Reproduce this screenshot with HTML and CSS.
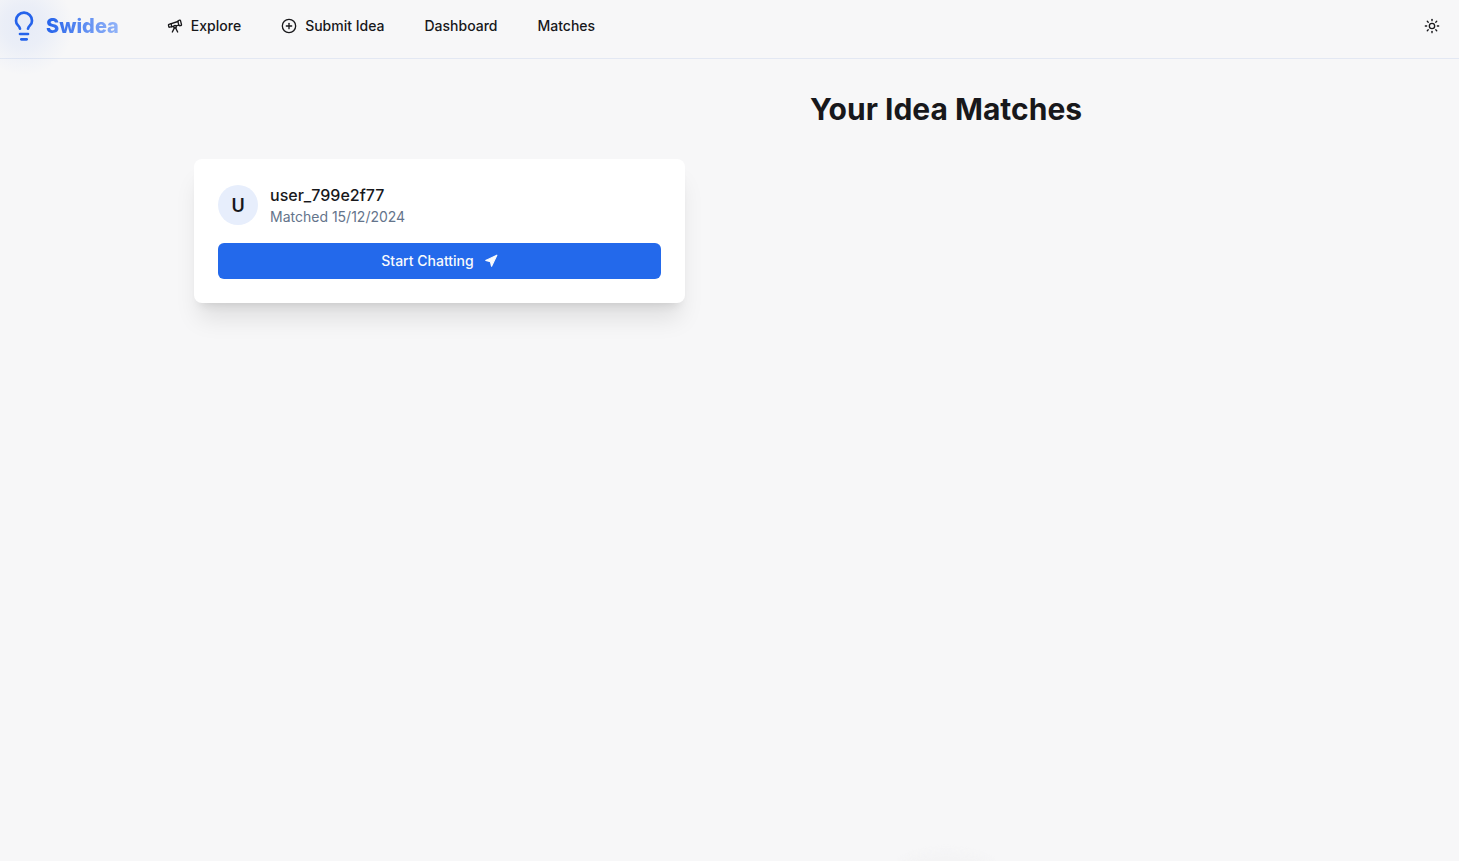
FILE: index.html
```html
<!DOCTYPE html>
<html lang="en">
<head>
  <meta charset="UTF-8">
  <meta name="viewport" content="width=device-width, initial-scale=1.0">
  <title>Swidea - Matches</title>
  <link rel="stylesheet" href="styles.css">
</head>
<body>
<header class="navbar">
  <div class="brand">
    <span class="brand-glow"></span>
    <svg class="brand-icon" viewBox="0 0 24 24">
      <path d="M15 14c.2-1 .7-1.7 1.5-2.5 1-.9 1.5-2.2 1.5-3.5A6 6 0 0 0 6 8c0 1 .2 2.2 1.5 3.5.7.7 1.3 1.5 1.5 2.5"/>
      <path d="M9 18h6"/>
      <path d="M10 22h4"/>
    </svg>
    <span class="brand-name">Swidea</span>
  </div>
  <nav class="nav-links">
    <a class="nav-link" href="#">
      <svg class="icon" viewBox="0 0 24 24">
        <path d="m10.065 12.493-6.18 1.318a.934.934 0 0 1-1.108-.702l-.537-2.15a1.07 1.07 0 0 1 .691-1.265l13.504-4.44"/>
        <path d="m13.56 11.747 4.332-.924"/>
        <path d="m16 21-3.105-6.21"/>
        <path d="M16.485 5.94a2 2 0 0 1 1.455-2.425l1.09-.272a1 1 0 0 1 1.212.727l1.515 6.06a1 1 0 0 1-.727 1.213l-1.09.272a2 2 0 0 1-2.425-1.455z"/>
        <path d="m6.158 8.633 1.114 4.456"/>
        <path d="m8 21 3.105-6.21"/>
        <circle cx="12" cy="13" r="2"/>
      </svg>
      Explore
    </a>
    <a class="nav-link" href="#">
      <svg class="icon" viewBox="0 0 24 24">
        <circle cx="12" cy="12" r="10"/>
        <path d="M8 12h8"/>
        <path d="M12 8v8"/>
      </svg>
      Submit Idea
    </a>
    <a class="nav-link" href="#">Dashboard</a>
    <a class="nav-link" href="#">Matches</a>
  </nav>
  <button class="theme-toggle" type="button" aria-label="Toggle theme">
    <svg class="icon" viewBox="0 0 24 24">
      <circle cx="12" cy="12" r="4"/>
      <path d="M12 2v2"/>
      <path d="M12 20v2"/>
      <path d="m4.93 4.93 1.41 1.41"/>
      <path d="m17.66 17.66 1.41 1.41"/>
      <path d="M2 12h2"/>
      <path d="M20 12h2"/>
      <path d="m6.34 17.66-1.41 1.41"/>
      <path d="m19.07 4.93-1.41 1.41"/>
    </svg>
  </button>
</header>

<main class="matches">
  <h1 class="matches-title">Your Idea Matches</h1>
  <div class="match-card">
    <div class="match-user">
      <div class="avatar">U</div>
      <div>
        <div class="user-name">user_799e2f77</div>
        <div class="match-date">Matched 15/12/2024</div>
      </div>
    </div>
    <button class="chat-button" type="button">
      <span class="chat-label">Start Chatting</span>
      <svg class="send-icon" viewBox="0 0 24 24">
        <polygon points="3 11 22 2 13 21 11 13 3 11"/>
      </svg>
    </button>
  </div>
</main>

<div class="bottom-glow"></div>
</body>
</html>
```

FILE: styles.css
```css
/* Body */
body {
  margin: 0;
  height: 861px;
  overflow: hidden;
  position: relative;
  background-color: #f7f7f8;
  color: #18181b;
  font-family: Inter, "Liberation Sans", sans-serif;
}

/* Navbar */
.navbar {
  display: flex;
  align-items: flex-start;
  height: 48px;
  padding: 10px 19px 0 8px;
  border-bottom: 1px solid #e3e8f3;
}

.brand {
  display: flex;
  align-items: center;
  gap: 6px;
  position: relative;
  height: 32px;
}

.brand-glow {
  position: absolute;
  left: -34px;
  top: -34px;
  width: 100px;
  height: 100px;
  border-radius: 50%;
  background: radial-gradient(circle, rgba(37, 99, 235, 0.08) 0%, rgba(37, 99, 235, 0.06) 30%, rgba(37, 99, 235, 0.02) 55%, rgba(37, 99, 235, 0) 70%);
}

.brand-icon {
  position: relative;
  width: 32px;
  height: 32px;
  fill: none;
  stroke: #2563eb;
  stroke-width: 2;
  stroke-linecap: round;
  stroke-linejoin: round;
}

.brand-name {
  position: relative;
  font-size: 20px;
  font-weight: 800;
  line-height: 32px;
  background: linear-gradient(90deg, #2563eb, #93b4f8);
  -webkit-background-clip: text;
  background-clip: text;
  color: transparent;
}

.nav-links {
  display: flex;
  align-items: center;
  gap: 40px;
  height: 32px;
  margin-left: 48px;
}

.nav-link {
  display: flex;
  align-items: center;
  gap: 8px;
  font-size: 14px;
  font-weight: 500;
  line-height: 20px;
  color: #18181b;
  text-decoration: none;
}

.icon {
  width: 16px;
  height: 16px;
  fill: none;
  stroke: #18181b;
  stroke-width: 2;
  stroke-linecap: round;
  stroke-linejoin: round;
}

.theme-toggle {
  display: flex;
  align-items: center;
  margin-left: auto;
  height: 32px;
  padding: 0;
  border: none;
  background: none;
}

/* Matches */
.matches {
  display: grid;
  grid-template-columns: 491px 522px;
  padding: 32px 0 0 194px;
}

.matches-title {
  grid-column: 2;
  margin: 0 0 32px;
  font-size: 30px;
  font-weight: 700;
  line-height: 36px;
  text-align: center;
  color: #18181b;
}

.match-card {
  grid-column: 1;
  padding: 24px;
  background-color: #fff;
  border-radius: 8px;
  box-shadow: 0 20px 25px -5px rgba(0, 0, 0, 0.1), 0 8px 10px -6px rgba(0, 0, 0, 0.1);
}

.match-user {
  display: flex;
  align-items: center;
  gap: 12px;
  margin-bottom: 16px;
}

.avatar {
  display: flex;
  align-items: center;
  justify-content: center;
  width: 40px;
  height: 40px;
  border-radius: 50%;
  background-color: #e7eefc;
  font-size: 18px;
  font-weight: 600;
}

.user-name {
  font-size: 16px;
  font-weight: 500;
  line-height: 24px;
}

.match-date {
  font-size: 14px;
  line-height: 20px;
  color: #64748b;
}

.chat-button {
  display: flex;
  align-items: center;
  justify-content: center;
  gap: 10px;
  width: 100%;
  height: 36px;
  padding: 0;
  border: none;
  border-radius: 6px;
  background-color: #2369eb;
  color: #f8fafc;
  font-family: inherit;
  font-size: 14px;
  font-weight: 500;
}

.chat-label {
  line-height: 20px;
  margin-top: -1px;
}

.send-icon {
  width: 14px;
  height: 14px;
  fill: #f8fafc;
  stroke: #f8fafc;
  stroke-width: 2;
  stroke-linecap: round;
  stroke-linejoin: round;
}

/* Faint blob at the bottom edge */
.bottom-glow {
  position: absolute;
  left: 896px;
  top: 851px;
  width: 100px;
  height: 40px;
  border-radius: 50%;
  background-color: #f4f4f5;
  filter: blur(3px);
}
```
